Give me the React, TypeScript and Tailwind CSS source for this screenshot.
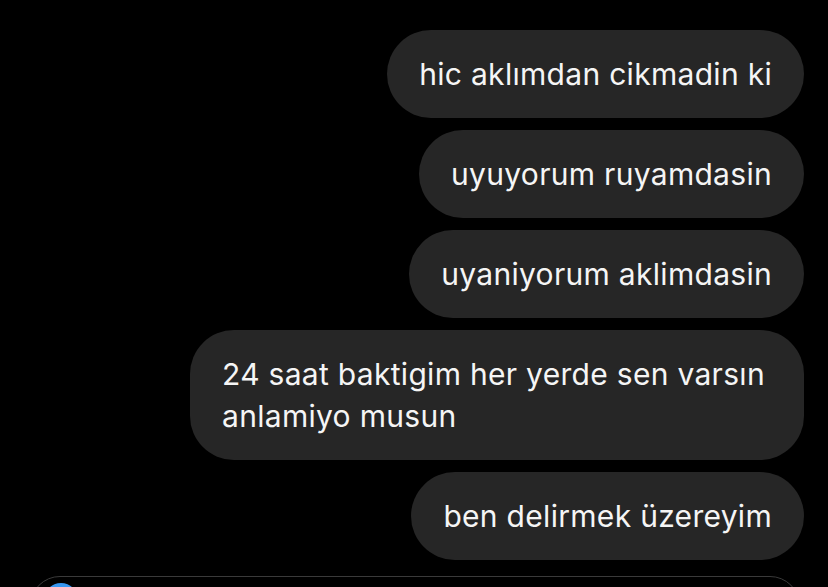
const messages = [
  "hic aklımdan cikmadin ki",
  "uyuyorum ruyamdasin",
  "uyaniyorum aklimdasin",
  "24 saat baktigim her yerde sen varsın anlamiyo musun",
  "ben delirmek üzereyim",
];

export default function App() {
  return (
    <div className="h-[587px] w-[828px] overflow-hidden bg-black font-['Inter','Liberation_Sans',sans-serif] text-[#f5f5f5]">
      {/* Sent message bubbles */}
      <div className="flex flex-col items-end gap-3 pr-6 pt-[30px]">
        {messages.map((text) => (
          <div
            key={text}
            className="max-w-[614px] rounded-[44px] bg-[#262626] px-8 py-[23px] text-[30px] leading-[42px] tracking-[0.3px]"
          >
            {text}
          </div>
        ))}
      </div>

      {/* Composer */}
      <div className="relative ml-[30px] mr-[28px] mt-4 h-[60px] rounded-full border-[1.5px] border-[#3a3a3a]">
        <div className="absolute left-[13px] top-[6px] h-[34px] w-[34px] rounded-full bg-[#3797f0]" />
      </div>
    </div>
  );
}
